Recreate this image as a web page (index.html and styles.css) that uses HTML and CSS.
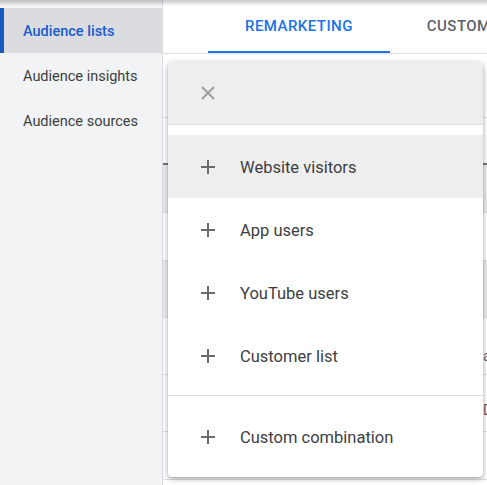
FILE: index.html
```html
<!DOCTYPE html>
<html lang="en">
<head>
    <meta charset="UTF-8">
    <meta name="viewport" content="width=device-width, initial-scale=1.0">
    <title>Audience manager</title>
    <link rel="stylesheet" href="styles.css">
</head>
<body>
    <div class="app">
        <nav class="sidebar">
            <a class="nav-item active">Audience lists</a>
            <a class="nav-item">Audience insights</a>
            <a class="nav-item">Audience sources</a>
        </nav>

        <main class="main">
            <div class="tabs">
                <div class="tab active">Remarketing</div>
                <div class="tab">Custom audiences</div>
            </div>

            <div class="toolbar"></div>
            <div class="table">
                <div class="row head"></div>
                <div class="row shaded"></div>
                <div class="row"></div>
                <div class="row shaded tall"></div>
                <div class="row tall"><span class="cell">all visitors</span></div>
                <div class="row tall"><span class="cell high">Do</span></div>
                <div class="row"></div>
            </div>

            <div class="menu">
                <div class="menu-head">
                    <svg class="close" width="14" height="14" viewBox="0 0 14 14">
                        <path d="M1 1L13 13M13 1L1 13" stroke="#9e9e9e" stroke-width="2" fill="none"/>
                    </svg>
                </div>
                <ul class="menu-list">
                    <li class="menu-item hover"><span class="plus"></span>Website visitors</li>
                    <li class="menu-item"><span class="plus"></span>App users</li>
                    <li class="menu-item"><span class="plus"></span>YouTube users</li>
                    <li class="menu-item"><span class="plus"></span>Customer list</li>
                    <li class="divider"></li>
                    <li class="menu-item"><span class="plus"></span>Custom combination</li>
                </ul>
            </div>
        </main>
    </div>
</body>
</html>
```

FILE: styles.css
```css
body {
    margin: 0;
    font-family: Roboto, "Liberation Sans", Arial, sans-serif;
    background-color: #fff;
}
.app {
    position: relative;
    display: flex;
    height: 100vh;
    overflow: hidden;
}
.app::before {
    content: "";
    position: absolute;
    left: 0;
    right: 0;
    top: 0;
    height: 6px;
    background: linear-gradient(rgba(0, 0, 0, 0.22), rgba(0, 0, 0, 0));
    z-index: 5;
}
.sidebar {
    width: 162px;
    flex-shrink: 0;
    background-color: #f1f3f4;
    border-right: 1px solid #dadce0;
    padding-top: 8px;
}
.nav-item {
    display: flex;
    align-items: center;
    height: 45px;
    box-sizing: border-box;
    padding: 2px 0 0 23px;
    font-size: 14.5px;
    color: #3c4043;
}
.nav-item.active {
    background-color: #dadce0;
    color: #1a5dd0;
    font-weight: 500;
    border-left: 4px solid #185abc;
    padding-left: 19px;
    margin-right: -1px;
}
.main {
    position: relative;
    flex: 1;
    background-color: #fff;
}
.tabs {
    display: flex;
    height: 53px;
    padding-left: 45px;
    border-bottom: 1px solid #e0e0e0;
}
.tab {
    display: flex;
    align-items: center;
    padding: 0 37px;
    font-size: 15px;
    font-weight: 500;
    text-transform: uppercase;
    letter-spacing: 0.45px;
    color: #5f6368;
    white-space: nowrap;
    border-bottom: 2px solid transparent;
}
.tab.active {
    color: #1a73e8;
    border-bottom-color: #1a73e8;
}
.toolbar {
    height: 63px;
    border-bottom: 1px solid #e0e0e0;
}
.row {
    height: 47px;
    border-bottom: 1px solid #e0e0e0;
    display: flex;
    align-items: flex-start;
}
.row.head {
    height: 45px;
    border-bottom: 2px solid #757575;
}
.row.shaded {
    background-color: #ececec;
}
.row.tall {
    height: 56px;
}
.cell {
    margin: 30px 0 0 320px;
    font-size: 14px;
    color: #5f6368;
    white-space: nowrap;
}
.cell.high {
    margin-top: 27px;
}
.menu {
    position: absolute;
    left: 5px;
    top: 62px;
    width: 315px;
    background-color: #fff;
    border-radius: 4px;
    box-shadow: 0 2px 6px rgba(0, 0, 0, 0.3), 0 1px 2px rgba(0, 0, 0, 0.15);
    overflow: hidden;
    z-index: 2;
}
.menu-head {
    display: flex;
    align-items: center;
    height: 62px;
    padding-left: 33px;
    background-color: #eeeeee;
    border-bottom: 1px solid #dcdcdc;
}
.menu-list {
    list-style: none;
    margin: 0;
    padding: 10px 0 9px;
}
.menu-item {
    display: flex;
    align-items: center;
    height: 63px;
    padding-top: 1px;
    box-sizing: border-box;
    font-size: 16.5px;
    color: #3c4043;
}
.menu-item.hover {
    background-color: #eeeeee;
}
.plus {
    position: relative;
    width: 14px;
    height: 14px;
    margin: -1px 25px 0 33px;
}
.plus::before,
.plus::after {
    content: "";
    position: absolute;
    background-color: #6b6b6b;
}
.plus::before {
    left: 0;
    right: 0;
    top: 6px;
    height: 2px;
}
.plus::after {
    top: 0;
    bottom: 0;
    left: 6px;
    width: 2px;
}
.divider {
    height: 1px;
    margin: 8px 0 9px;
    background-color: #dcdcdc;
}
```
